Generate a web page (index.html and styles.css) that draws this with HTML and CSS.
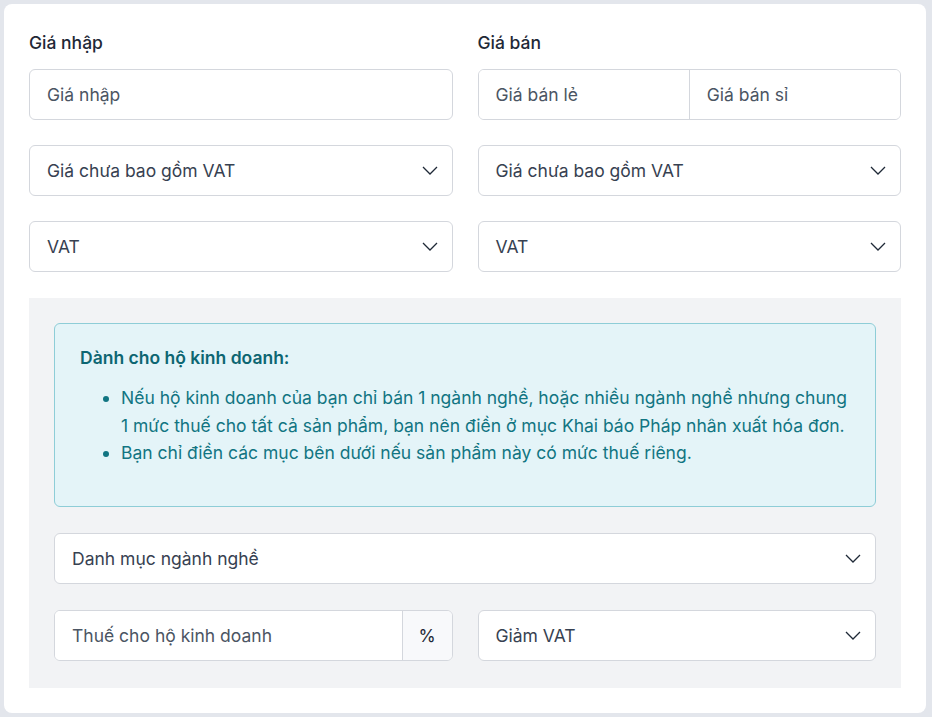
FILE: index.html
```html
<!DOCTYPE html>
<html lang="vi">
<head>
    <meta charset="UTF-8" />
    <meta name="viewport" content="width=device-width, initial-scale=1.0" />
    <title>Giá sản phẩm</title>
    <link rel="stylesheet" href="styles.css">
</head>
<body>
    <div class="card">
        <div class="grid">
            <div class="col">
                <label class="field-label" for="giaNhap">Giá nhập</label>
                <input class="input" type="text" id="giaNhap" placeholder="Giá nhập" />
                <div class="select">
                    <span>Giá chưa bao gồm VAT</span>
                    <svg class="chevron" viewBox="0 0 16 9" width="16" height="9"><path d="M1 1l7 7 7-7" fill="none" stroke="#1f2937" stroke-width="1.3"/></svg>
                </div>
                <div class="select">
                    <span>VAT</span>
                    <svg class="chevron" viewBox="0 0 16 9" width="16" height="9"><path d="M1 1l7 7 7-7" fill="none" stroke="#1f2937" stroke-width="1.3"/></svg>
                </div>
            </div>
            <div class="col">
                <label class="field-label" for="giaLe">Giá bán</label>
                <div class="input-group">
                    <input class="input" type="text" id="giaLe" placeholder="Giá bán lẻ" />
                    <input class="input" type="text" id="giaSi" placeholder="Giá bán sỉ" />
                </div>
                <div class="select">
                    <span>Giá chưa bao gồm VAT</span>
                    <svg class="chevron" viewBox="0 0 16 9" width="16" height="9"><path d="M1 1l7 7 7-7" fill="none" stroke="#1f2937" stroke-width="1.3"/></svg>
                </div>
                <div class="select">
                    <span>VAT</span>
                    <svg class="chevron" viewBox="0 0 16 9" width="16" height="9"><path d="M1 1l7 7 7-7" fill="none" stroke="#1f2937" stroke-width="1.3"/></svg>
                </div>
            </div>
        </div>

        <div class="household">
            <div class="info">
                <p class="info-title">Dành cho hộ kinh doanh:</p>
                <ul>
                    <li>Nếu hộ kinh doanh của bạn chỉ bán 1 ngành nghề, hoặc nhiều ngành nghề nhưng chung 1 mức thuế cho tất cả sản phẩm, bạn nên điền ở mục Khai báo Pháp nhân xuất hóa đơn.</li>
                    <li>Bạn chỉ điền các mục bên dưới nếu sản phẩm này có mức thuế riêng.</li>
                </ul>
            </div>

            <div class="select">
                <span>Danh mục ngành nghề</span>
                <svg class="chevron" viewBox="0 0 16 9" width="16" height="9"><path d="M1 1l7 7 7-7" fill="none" stroke="#1f2937" stroke-width="1.3"/></svg>
            </div>

            <div class="grid">
                <div class="input-group">
                    <input class="input" type="text" placeholder="Thuế cho hộ kinh doanh" />
                    <span class="addon">%</span>
                </div>
                <div class="select">
                    <span>Giảm VAT</span>
                    <svg class="chevron" viewBox="0 0 16 9" width="16" height="9"><path d="M1 1l7 7 7-7" fill="none" stroke="#1f2937" stroke-width="1.3"/></svg>
                </div>
            </div>
        </div>
    </div>
</body>
</html>
```

FILE: styles.css
```css
* {
    box-sizing: border-box;
}

body {
    margin: 0;
    padding: 4px 6px 4px 4px;
    background-color: #e3e6ec;
    font-family: Inter, "Noto Sans", sans-serif;
    font-size: 17.5px;
    color: #111827;
}

.card {
    background: #fff;
    border-radius: 8px;
    padding: 27px 25px 25px;
    height: 709px;
}

.grid {
    display: grid;
    grid-template-columns: 1fr 1fr;
    column-gap: 25px;
}

.col {
    display: flex;
    flex-direction: column;
    gap: 25px;
}

.field-label {
    display: block;
    font-weight: 500;
    line-height: 24px;
    margin-bottom: -11px;
    color: #1f2937;
}

/* Ô nhập */
.input {
    display: block;
    width: 100%;
    height: 51px;
    padding: 0 17px;
    border: 1px solid #d4d7dd;
    border-radius: 6px;
    font: inherit;
    color: #111827;
    background: #fff;
}

.input::placeholder {
    color: #4b5563;
}

.input-group {
    display: flex;
    height: 51px;
    border: 1px solid #d4d7dd;
    border-radius: 6px;
    overflow: hidden;
    background: #fff;
}

.input-group .input {
    flex: 1;
    min-width: 0;
    height: 100%;
    border: none;
    border-radius: 0;
}

.input-group .input + .input {
    border-left: 1px solid #d4d7dd;
}

.addon {
    width: 50px;
    display: flex;
    align-items: center;
    justify-content: center;
    background: #f8f9fb;
    border-left: 1px solid #d4d7dd;
    color: #1f2937;
}

/* Rozbalovací seznam */
.select {
    display: flex;
    align-items: center;
    justify-content: space-between;
    height: 51px;
    padding: 0 14px 0 17px;
    border: 1px solid #d4d7dd;
    border-radius: 6px;
    background: #fff;
    color: #374151;
}

.chevron {
    display: block;
}

.household {
    margin-top: 26px;
    background: #f2f3f5;
    padding: 25px 25px 27px;
    display: flex;
    flex-direction: column;
    gap: 26px;
}

.info {
    background: #e4f4f8;
    border: 1px solid #8ecdd7;
    border-radius: 6px;
    padding: 22px 25px 40px;
    color: #117582;
    height: 184px;
}

.info-title {
    margin: 0 0 14px;
    font-weight: 600;
    line-height: 24px;
    color: #0d6672;
}

.info ul {
    margin: 0;
    padding-left: 41px;
    line-height: 27.5px;
}
```
